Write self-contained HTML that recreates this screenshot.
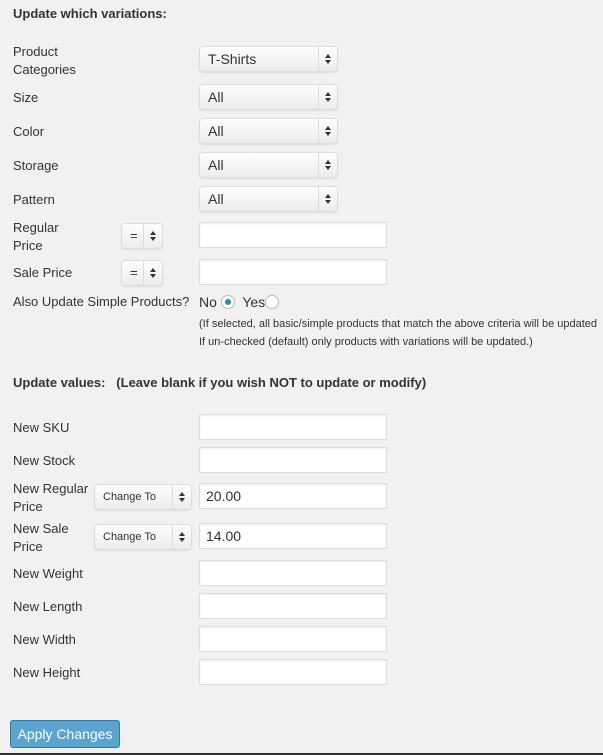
<!DOCTYPE html>
<html><head><meta charset="utf-8"><style>
body{margin:0;width:603px;height:755px;background:#f1f1f1;font-family:"Liberation Sans",sans-serif;font-size:13px;color:#333;position:relative;overflow:hidden}
.a{position:absolute;white-space:nowrap}
.l{position:absolute;left:13px;line-height:18px;margin-top:1px}
.b{font-weight:bold}
.sel{position:absolute;height:26px;border:1px solid #ddd;border-radius:4px;background:linear-gradient(#fefefe,#ececec);box-sizing:border-box;box-shadow:0 1px 1px rgba(0,0,0,.08)}
.sel span{position:absolute;left:8px;top:4px;font-size:14px;color:#333}
.sel i{position:absolute;right:0;top:0;bottom:0;width:18px;border-left:1px solid #ddd}
.sel i:before{content:"";position:absolute;left:6px;top:7px;border:3px solid transparent;border-bottom:4px solid #333;border-top:0}
.sel i:after{content:"";position:absolute;left:6px;top:13px;border:3px solid transparent;border-top:4px solid #333;border-bottom:0}
.in{position:absolute;left:199px;width:188px;height:26px;border:1px solid #ddd;background:#fff;box-sizing:border-box;box-shadow:inset 0 1px 2px rgba(0,0,0,.07)}
.in span{position:absolute;left:6px;top:4px;font-size:14px;color:#333}
.r{display:inline-block;width:14px;height:14px;border:1px solid #bbb;border-radius:50%;background:#fff;vertical-align:-2px;position:relative;box-sizing:border-box}
.r.on:after{content:"";position:absolute;left:3px;top:3px;width:6px;height:6px;border-radius:50%;background:#1e8cbe}
</style></head><body>
<div class="a b" style="left:13px;top:6px">Update which variations:</div>

<div class="l" style="top:42px">Product<br>Categories</div>
<div class="sel" style="left:199px;top:46px;width:139px"><span>T-Shirts</span><i></i></div>
<div class="l" style="top:88px">Size</div>
<div class="sel" style="left:199px;top:84px;width:139px"><span>All</span><i></i></div>
<div class="l" style="top:122px">Color</div>
<div class="sel" style="left:199px;top:118px;width:139px"><span>All</span><i></i></div>
<div class="l" style="top:156px">Storage</div>
<div class="sel" style="left:199px;top:152px;width:139px"><span>All</span><i></i></div>
<div class="l" style="top:190px">Pattern</div>
<div class="sel" style="left:199px;top:186px;width:139px"><span>All</span><i></i></div>

<div class="l" style="top:218px">Regular<br>Price</div>
<div class="sel" style="left:121px;top:223px;width:42px"><span style="font-size:13px">=</span><i></i></div>
<div class="in" style="top:222px"></div>
<div class="l" style="top:263px">Sale Price</div>
<div class="sel" style="left:121px;top:260px;width:42px"><span style="font-size:13px">=</span><i></i></div>
<div class="in" style="top:259px"></div>

<div class="l" style="top:292px">Also Update Simple Products?</div>
<div class="a" style="left:199px;top:294px;font-size:14px">No <span class="r on"></span>&nbsp; Yes<span class="r"></span></div>
<div class="a" style="left:199px;top:318px;font-size:11px">(If selected, all basic/simple products that match the above criteria will be updated</div>
<div class="a" style="left:199px;top:336px;font-size:11px">If un-checked (default) only products with variations will be updated.)</div>

<div class="a b" style="left:13px;top:375px">Update values:&nbsp;&nbsp; (Leave blank if you wish NOT to update or modify)</div>

<div class="l" style="top:418px">New SKU</div><div class="in" style="top:414px"></div>
<div class="l" style="top:451px">New Stock</div><div class="in" style="top:447px"></div>
<div class="l" style="top:479px">New Regular<br>Price</div>
<div class="sel" style="left:94px;top:484px;width:98px"><span style="font-size:11px;top:6px">Change To</span><i></i></div>
<div class="in" style="top:483px"><span>20.00</span></div>
<div class="l" style="top:519px">New Sale<br>Price</div>
<div class="sel" style="left:94px;top:524px;width:98px"><span style="font-size:11px;top:6px">Change To</span><i></i></div>
<div class="in" style="top:523px"><span>14.00</span></div>
<div class="l" style="top:564px">New Weight</div><div class="in" style="top:560px"></div>
<div class="l" style="top:597px">New Length</div><div class="in" style="top:593px"></div>
<div class="l" style="top:630px">New Width</div><div class="in" style="top:626px"></div>
<div class="l" style="top:663px">New Height</div><div class="in" style="top:659px"></div>

<div class="a" style="left:10px;top:720px;width:110px;height:28px;box-sizing:border-box;background:#5aa4cf;border:1px solid #2e7aa8;border-radius:3px;color:#fff;font-size:14px;text-align:center;line-height:26px">Apply Changes</div>
<div class="a" style="left:0;top:753px;width:603px;height:2px;background:#333"></div>
</body></html>
